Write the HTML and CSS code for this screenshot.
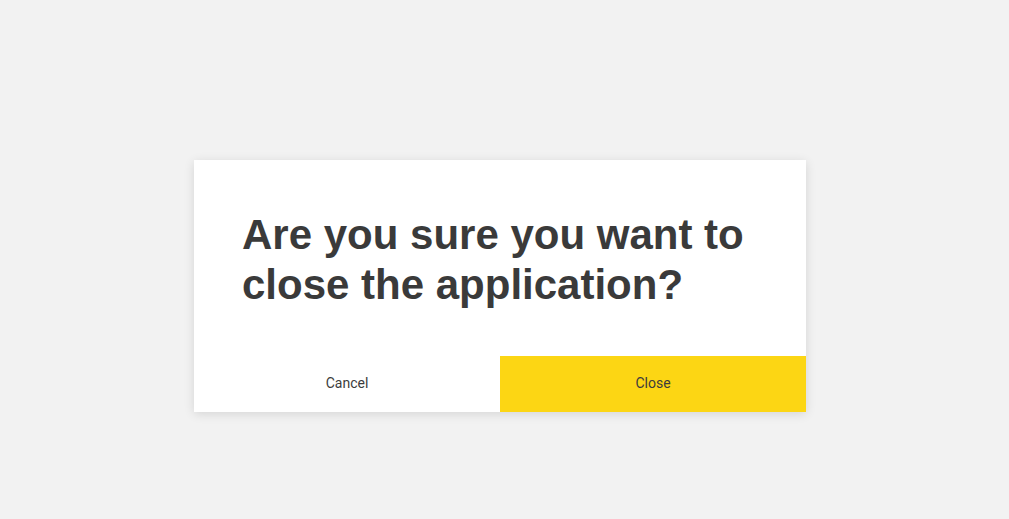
FILE: index.html
```html
<!DOCTYPE html>
<html>
<head>
<meta charset="utf-8">
<link rel="stylesheet" href="styles.css">
</head>
<body>
<div class="page">
  <div class="dialog">
    <h1 class="title">Are you sure you want to<br>close the application?</h1>
    <div class="actions">
      <button class="btn btn-cancel">Cancel</button>
      <button class="btn btn-close">Close</button>
    </div>
  </div>
</div>
</body>
</html>
```
FILE: styles.css
```css
html, body {
  margin: 0;
  padding: 0;
  background: #f2f2f2;
}
.page {
  width: 1009px;
  height: 519px;
  padding: 160px 0 0 194px;
  box-sizing: border-box;
  display: flex;
  align-items: flex-start;
}
.dialog {
  width: 612px;
  background: #ffffff;
  box-shadow: 0 2px 10px rgba(0,0,0,0.12);
  display: flex;
  flex-direction: column;
}
.title {
  margin: 0;
  padding: 50px 48px 46px 48px;
  font-family: "Liberation Sans", Arial, sans-serif;
  font-weight: 700;
  font-size: 42px;
  line-height: 50px;
  color: #3a3a3a;
}
.actions {
  display: flex;
  height: 56px;
}
.btn {
  flex: 1;
  border: none;
  margin: 0;
  padding: 0 0 2px 0;
  font-family: Roboto, "Liberation Sans", sans-serif;
  font-size: 14px;
  color: #3c3c3c;
  cursor: pointer;
}
.btn-cancel {
  background: #ffffff;
}
.btn-close {
  background: #fcd614;
}
```
